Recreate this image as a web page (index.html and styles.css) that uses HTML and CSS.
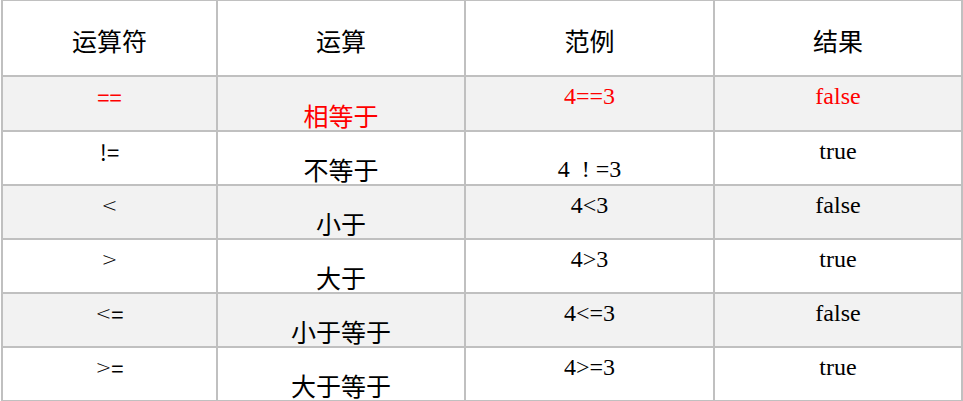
FILE: index.html
```html
<!DOCTYPE html>
<html lang="zh-CN">
<head>
<meta charset="utf-8">
<title>比较运算符</title>
<link rel="stylesheet" href="styles.css">
</head>
<body>
<div class="table">
  <div class="cell head">运算符</div>
  <div class="cell head">运算</div>
  <div class="cell head">范例</div>
  <div class="cell head">结果</div>

  <div class="cell op gray red">==</div>
  <div class="cell name gray red">相等于</div>
  <div class="cell ex gray red">4==3</div>
  <div class="cell res gray red">false</div>

  <div class="cell op">!=</div>
  <div class="cell name">不等于</div>
  <div class="cell ex low">4&nbsp; ! =3</div>
  <div class="cell res">true</div>

  <div class="cell op gray"><span class="chev">&lt;</span></div>
  <div class="cell name gray">小于</div>
  <div class="cell ex gray">4&lt;3</div>
  <div class="cell res gray">false</div>

  <div class="cell op"><span class="chev">&gt;</span></div>
  <div class="cell name">大于</div>
  <div class="cell ex">4&gt;3</div>
  <div class="cell res">true</div>

  <div class="cell op gray"><span class="chev">&lt;</span>=</div>
  <div class="cell name gray">小于等于</div>
  <div class="cell ex gray">4&lt;=3</div>
  <div class="cell res gray">false</div>

  <div class="cell op"><span class="chev">&gt;</span>=</div>
  <div class="cell name">大于等于</div>
  <div class="cell ex">4&gt;=3</div>
  <div class="cell res">true</div>
</div>
</body>
</html>
```
FILE: styles.css
```css
html, body {
  margin: 0;
  padding: 0;
  background: #ffffff;
  overflow: hidden;
}

body {
  width: 963px;
  height: 401px;
  font-family: "Noto Sans CJK SC", sans-serif;
  color: #000000;
}

.table {
  display: grid;
  grid-template-columns: 213px 246px 247px 246px;
  grid-template-rows: 74px 53px 52px 52px 52px 52px 52px;
  column-gap: 2px;
  row-gap: 2px;
  background: #c0c0c0;
  border: 2px solid #c0c0c0;
  margin: -1px 0 0 1px;
  width: 958px;
}

.cell {
  background: #ffffff;
  display: flex;
  justify-content: center;
  align-items: flex-start;
  white-space: nowrap;
}

.cell.gray {
  background: #f2f2f2;
}

.head {
  align-items: center;
  font-size: 25px;
  line-height: 30px;
  padding-top: 4px;
}

.op {
  font-size: 22px;
  line-height: 30px;
  padding-top: 4px;
}

.chev {
  font-family: "DejaVu Sans", sans-serif;
  font-size: 19px;
  font-weight: 300;
}

.name {
  align-items: flex-end;
  font-size: 25px;
  line-height: 30px;
  padding-bottom: 0;
}

.ex,
.res {
  font-family: "Liberation Serif", serif;
  font-size: 24px;
  line-height: 30px;
  padding-top: 4px;
}

.ex.low {
  align-items: flex-end;
  padding-top: 0;
}

.red {
  color: #ff0000;
}
```
